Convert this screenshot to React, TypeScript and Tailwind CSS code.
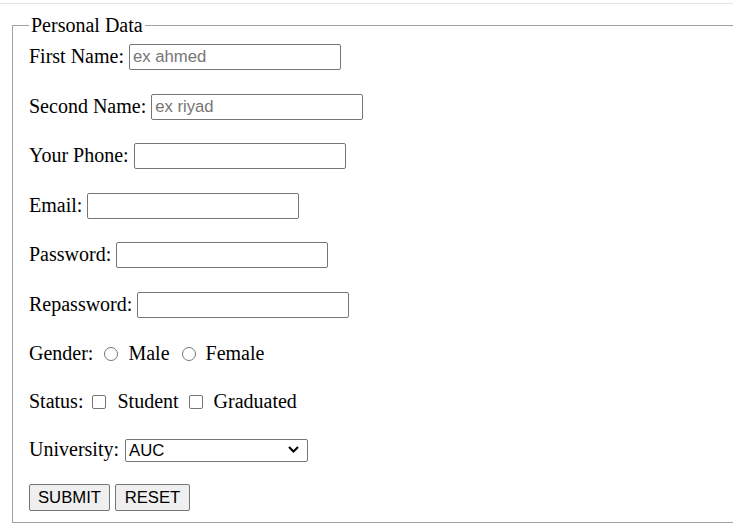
import React from "react";

const serif = { fontFamily: '"Liberation Serif", "Times New Roman", serif' };

const inputCls =
  "h-[26px] w-[212px] rounded-[2px] border border-[#767676] bg-white px-[3px] text-[16.7px] text-black outline-none placeholder:text-[#757575] font-['Liberation_Sans',Arial,sans-serif]";

function Row({
  label,
  placeholder,
  type = "text",
  className = "",
}: {
  label: string;
  placeholder?: string;
  type?: string;
  className?: string;
}) {
  return (
    <div className={`flex h-[27px] items-center gap-[5px] ${className}`}>
      <span>{label}</span>
      <input type={type} placeholder={placeholder} className={inputCls} />
    </div>
  );
}

function Radio() {
  return (
    <input
      type="radio"
      name="gender"
      className="h-[14px] w-[14px] shrink-0 appearance-none rounded-full border border-[#767676] bg-white"
    />
  );
}

function Check() {
  return (
    <input
      type="checkbox"
      className="h-[14px] w-[14px] shrink-0 appearance-none rounded-[2px] border border-[#767676] bg-white"
    />
  );
}

export default function App() {
  return (
    <div
      className="relative h-[532px] w-[733px] overflow-hidden bg-white pt-[3px] text-[20px] leading-[23px] text-black"
      style={serif}
    >
      <div className="h-px w-full bg-[#e3e3e3]" />
      <fieldset className="ml-[12px] mt-[10px] w-[780px] border border-[#a0a0a0] pb-[11px] pl-[16px]">
        <legend className="px-[2px] leading-[23px]">Personal Data</legend>
        <div className="flex flex-col pt-[6px]">
          <Row label="First Name:" placeholder="ex ahmed" />
          <Row label="Second Name:" placeholder="ex riyad" className="mt-[23px]" />
          <Row label="Your Phone:" className="mt-[22px]" />
          <Row label="Email:" type="email" className="mt-[23px]" />
          <Row label="Password:" type="password" className="mt-[22px]" />
          <Row label="Repassword:" type="password" className="mt-[23px]" />

          <div className="mt-[22px] flex h-[27px] items-center">
            <span>Gender:</span>
            <span className="ml-[11px] flex"><Radio /></span>
            <span className="ml-[10px]">Male</span>
            <span className="ml-[12px] flex"><Radio /></span>
            <span className="ml-[10px]">Female</span>
          </div>

          <div className="mt-[21px] flex h-[27px] items-center">
            <span>Status:</span>
            <span className="ml-[9px] flex"><Check /></span>
            <span className="ml-[11px]">Student</span>
            <span className="ml-[10px] flex"><Check /></span>
            <span className="ml-[11px]">Graduated</span>
          </div>

          <div className="mt-[21px] flex h-[27px] items-center gap-[6px]">
            <span>University:</span>
            <div className="relative h-[23px] w-[183px]">
              <select className="h-[23px] w-[183px] appearance-none rounded-[2px] border border-[#767676] bg-white pl-[3px] text-[16.7px] leading-[21px] text-black outline-none font-['Liberation_Sans',Arial,sans-serif]">
                <option>AUC</option>
                <option>Cairo University</option>
                <option>Ain Shams</option>
              </select>
              <svg
                className="pointer-events-none absolute right-[9px] top-[8px]"
                width="11"
                height="7"
                viewBox="0 0 11 7"
              >
                <path d="M1 1l4.5 4.5L10 1" fill="none" stroke="#000" strokeWidth="2" />
              </svg>
            </div>
          </div>

          <div className="mt-[21px] flex h-[27px] items-center gap-[5px] font-['Liberation_Sans',Arial,sans-serif] text-[16.7px]">
            <button className="h-[27px] w-[81px] rounded-[2px] border border-[#767676] bg-[#efefef]">
              SUBMIT
            </button>
            <button className="h-[27px] w-[75px] rounded-[2px] border border-[#767676] bg-[#efefef]">
              RESET
            </button>
          </div>
        </div>
      </fieldset>
    </div>
  );
}
